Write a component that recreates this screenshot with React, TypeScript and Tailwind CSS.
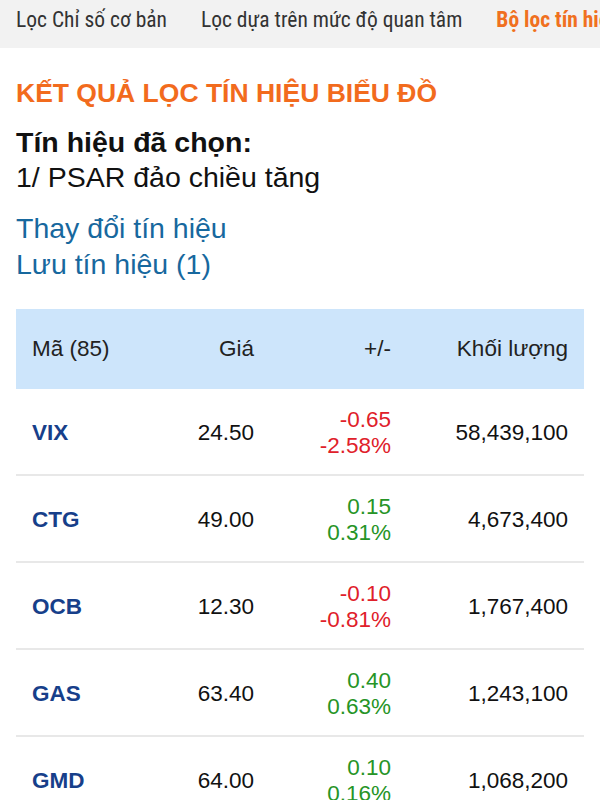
import React from 'react';

interface Row {
  code: string;
  price: string;
  change: string;
  percent: string;
  volume: string;
}

const ROWS: Row[] = [
  { code: 'VIX', price: '24.50', change: '-0.65', percent: '-2.58%', volume: '58,439,100' },
  { code: 'CTG', price: '49.00', change: '0.15', percent: '0.31%', volume: '4,673,400' },
  { code: 'OCB', price: '12.30', change: '-0.10', percent: '-0.81%', volume: '1,767,400' },
  { code: 'GAS', price: '63.40', change: '0.40', percent: '0.63%', volume: '1,243,100' },
  { code: 'GMD', price: '64.00', change: '0.10', percent: '0.16%', volume: '1,068,200' },
];

const TABS = ['Lọc Chỉ số cơ bản', 'Lọc dựa trên mức độ quan tâm', 'Bộ lọc tín hiệu biểu đồ'];

export default function App() {
  return (
    <div className="w-[600px] h-[800px] overflow-hidden bg-white font-['Liberation_Sans',Arial,sans-serif]">
      {/* tabs */}
      <div className="h-[48px] bg-[#f2f2f2] pt-2 pl-4 flex gap-[34px] whitespace-nowrap overflow-hidden font-['Liberation_Sans_Narrow','Roboto_Condensed','DejaVu_Sans_Condensed',sans-serif] text-[21.5px] leading-6">
        {TABS.map((tab, i) => (
          <span key={tab} className={i === 2 ? 'text-[#f07020] font-bold' : 'text-[#333333]'}>
            {tab}
          </span>
        ))}
      </div>

      <div className="px-4">
        <h1 className="mt-[30px] text-[26.5px] leading-[30px] font-bold text-[#f26b1d]">
          KẾT QUẢ LỌC TÍN HIỆU BIỂU ĐỒ
        </h1>

        <div className="mt-[17px] text-[28.5px] leading-[35px] text-[#111111]">
          <p className="font-bold">Tín hiệu đã chọn:</p>
          <p>1/ PSAR đảo chiều tăng</p>
        </div>

        <div className="mt-[15px] flex flex-col items-start text-[28.5px] leading-[36px] text-[#17689e]">
          <a href="#">Thay đổi tín hiệu</a>
          <a href="#">Lưu tín hiệu (1)</a>
        </div>

        <div className="mt-[27px] text-[22.5px] text-[#111111]">
          <div className="h-[80px] bg-[#cde5fb] pl-4 pr-4 grid grid-cols-[110px_112px_137px_1fr] items-center text-[#222222]">
            <span>Mã (85)</span>
            <span className="text-right">Giá</span>
            <span className="text-right">+/-</span>
            <span className="text-right">Khối lượng</span>
          </div>
          {ROWS.map((row) => {
            const down = row.change.startsWith('-');
            return (
              <div
                key={row.code}
                className="h-[87px] border-b-2 border-[#e8e8e8] pl-4 pr-4 pt-[3px] grid grid-cols-[110px_112px_137px_1fr] items-center"
              >
                <span className="font-bold text-[#173f8a]">{row.code}</span>
                <span className="text-right">{row.price}</span>
                <span className={`text-right leading-[26px] ${down ? 'text-[#e0202a]' : 'text-[#269426]'}`}>
                  {row.change}
                  <br />
                  {row.percent}
                </span>
                <span className="text-right">{row.volume}</span>
              </div>
            );
          })}
        </div>
      </div>
    </div>
  );
}
